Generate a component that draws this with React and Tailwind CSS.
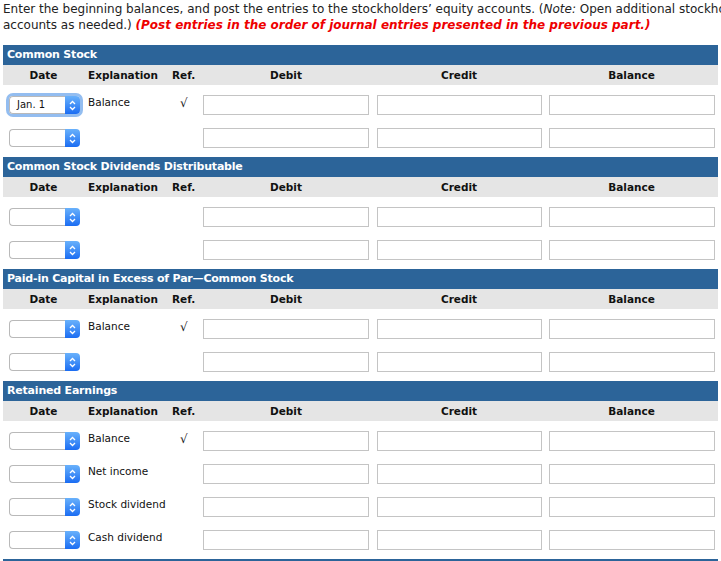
import React from 'react'

// Ledger accounts, rows in the order the entries are posted
const ACCOUNTS = [
  { title: 'Common Stock', rows: [{ date: 'Jan. 1', focused: true, expl: 'Balance', ref: true }, {}] },
  { title: 'Common Stock Dividends Distributable', rows: [{}, {}] },
  { title: 'Paid-in Capital in Excess of Par\u2014Common Stock', rows: [{ expl: 'Balance', ref: true }, {}] },
  {
    title: 'Retained Earnings',
    rows: [{ expl: 'Balance', ref: true }, { expl: 'Net income' }, { expl: 'Stock dividend' }, { expl: 'Cash dividend' }],
  },
]

const GRID = 'grid grid-cols-[81px_84px_31px_174px_172px_173px]'

function DateSelect({ value, focused }) {
  return (
    <div className={`flex h-[18px] w-[71px] rounded-[4px] ${focused ? 'ring-[3px] ring-[#93bdf0]' : ''}`}>
      <div className="flex-1 border border-r-0 border-[#b9b9b9] rounded-l-[4px] bg-white text-[10px] leading-[16px] pl-[7px] text-[#111]">
        {value}
      </div>
      <div className="w-[15px] rounded-r-[4px] bg-linear-to-b from-[#69b1fb] to-[#1a6cf2] flex items-center justify-center">
        <svg width="7" height="11" viewBox="0 0 7 11" fill="none" stroke="white" strokeWidth="1.3">
          <path d="M1 4 L3.5 1.5 L6 4" />
          <path d="M1 7 L3.5 9.5 L6 7" />
        </svg>
      </div>
    </div>
  )
}

function Field() {
  return <div className="h-[20px] border border-[#c4c4c4] bg-white" />
}

function Account({ account }) {
  return (
    <div>
      <div className="h-[20px] bg-[#2c6499] text-white font-bold text-[11px] leading-[20px] pl-[4px] tracking-[-0.2px]">{account.title}</div>
      <div className={`${GRID} h-[20px] bg-[#e5e5e5] text-[10.5px] font-bold leading-[20px] text-[#111]`}>
        <div className="text-center">Date</div>
        <div className="pl-[4px]">Explanation</div>
        <div className="pl-[4px]">Ref.</div>
        <div className="text-center">Debit</div>
        <div className="text-center">Credit</div>
        <div className="text-center">Balance</div>
      </div>
      <div className="pt-[10px] pb-[9px] flex flex-col gap-[13px]">
        {account.rows.map((r, i) => (
          <div key={i} className={`${GRID} h-[20px] text-[10.5px] text-[#111]`}>
            <div className="pl-[6px] pt-[1px]">
              <DateSelect value={r.date} focused={r.focused} />
            </div>
            <div className="pl-[4px] leading-[14px] whitespace-nowrap">{r.expl}</div>
            <div className="pl-[12px] leading-[16px] text-[12px]">{r.ref ? '\u221a' : ''}</div>
            <div className="pl-[4px] pr-[4px]"><Field /></div>
            <div className="pl-[4px] pr-[3px]"><Field /></div>
            <div className="pl-[4px] pr-[3px]"><Field /></div>
          </div>
        ))}
      </div>
    </div>
  )
}

export default function App() {
  return (
    <div className="w-[721px] h-[561px] overflow-hidden bg-white font-['DejaVu_Sans',Verdana,sans-serif]">
      <div className="px-[3px] pt-[1px] text-[12px] leading-[16px] text-[#222] whitespace-nowrap">
        <div>
          Enter the beginning balances, and post the entries to the stockholders’ equity accounts. (<i>Note:</i> Open additional stockholders’ equity
        </div>
        <div>
          accounts as needed.) <b className="text-[#ee0000] italic">(Post entries in the order of journal entries presented in the previous part.)</b>
        </div>
      </div>
      <div className="mt-[12px] ml-[3px] w-[715px]">
        {ACCOUNTS.map((a) => <Account key={a.title} account={a} />)}
        <div className="h-[3px] bg-[#2c6499]" />
      </div>
    </div>
  )
}
